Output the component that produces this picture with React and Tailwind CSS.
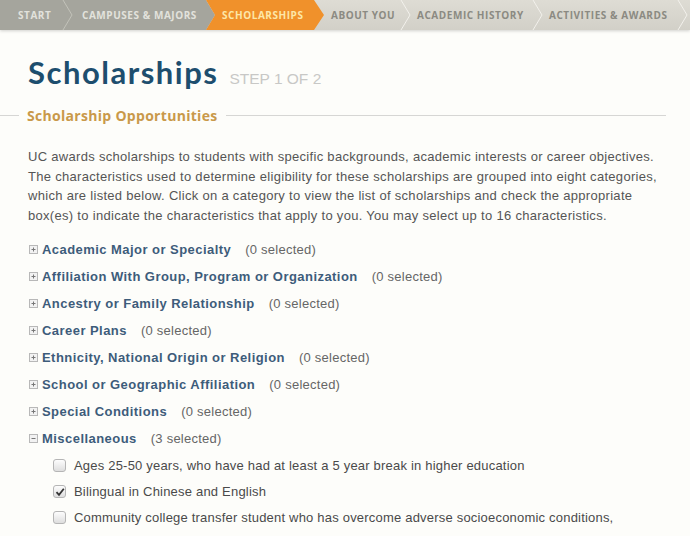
import React from "react";

const Chev = ({ color = "#c4c4bc" }) => (
  <svg width="12" height="30" viewBox="0 0 12 30" className="shrink-0">
    <polyline points="1,0 10,15 1,30" fill="none" stroke={color} strokeWidth="1" />
  </svg>
);

const navText = "text-[10px] font-bold tracking-[0.55px] uppercase whitespace-nowrap";

const categories = [
  ["Academic Major or Specialty", "(0 selected)"],
  ["Affiliation With Group, Program or Organization", "(0 selected)"],
  ["Ancestry or Family Relationship", "(0 selected)"],
  ["Career Plans", "(0 selected)"],
  ["Ethnicity, National Origin or Religion", "(0 selected)"],
  ["School or Geographic Affiliation", "(0 selected)"],
  ["Special Conditions", "(0 selected)"],
];

const Plus = ({ minus }) => (
  <svg width="9" height="9" viewBox="0 0 9 9" className="shrink-0">
    <rect x="0.5" y="0.5" width="8" height="8" fill="#f2f2f2" stroke="#b8b8b8" />
    <line x1="2.5" y1="4.5" x2="6.5" y2="4.5" stroke="#777" />
    {!minus && <line x1="4.5" y1="2.5" x2="4.5" y2="6.5" stroke="#777" />}
  </svg>
);

const Box = ({ checked }) => (
  <div className="w-[13px] h-[13px] rounded-[3px] border border-[#b5b5b5] bg-gradient-to-b from-[#fdfdfd] to-[#dedede] flex items-center justify-center shrink-0">
    {checked && (
      <svg width="10" height="10" viewBox="0 0 10 10">
        <path d="M1.5 5.2 L4 7.8 L8.8 1.8" fill="none" stroke="#333" strokeWidth="1.8" />
      </svg>
    )}
  </div>
);

const labelCls = "ml-[4px] font-bold text-[13px] tracking-[0.45px] text-[#3d5c7a]";
const selCls = "ml-[14px] text-[13px] tracking-[0.25px] text-[#666]";
const itemCls = "ml-[8px] text-[13px] tracking-[0.2px] text-[#4a4a4a]";

export default function App() {
  return (
    <div className="w-[690px] h-[536px] overflow-hidden bg-[#fdfdfa] font-['Liberation_Sans',Arial,sans-serif]">
      {/* nav */}
      <div className="flex h-[30px] bg-gradient-to-b from-[#dedcd4] to-[#d2d0c8] shadow-[0_1px_3px_rgba(0,0,0,0.18)] font-['Open_Sans',sans-serif]">
        <div className="flex items-center h-full w-[215px] shrink-0 bg-[#a5a59d] [clip-path:polygon(0_0,calc(100%-9px)_0,100%_50%,calc(100%-9px)_100%,0_100%)]">
          <span className={`${navText} text-[#e2e2dc] pl-[18px] w-[62px]`}>Start</span>
          <Chev color="#c2c2ba" />
          <span className={`${navText} text-[#e2e2dc] pl-[8px]`}>Campuses &amp; Majors</span>
        </div>
        <div className="flex items-center h-full w-[118px] ml-[-9px] shrink-0 bg-[#f0912b] [clip-path:polygon(0_0,calc(100%-10px)_0,100%_50%,calc(100%-10px)_100%,0_100%,9px_50%)]">
          <span className={`${navText} text-[#fde7a8] pl-[16px]`}>Scholarships</span>
        </div>
        <div className="flex items-center h-full">
          <span className={`${navText} text-[#8b8a82] pl-[7px] w-[76px]`}>About You</span>
          <Chev color="#f2f1ec" />
          <span className={`${navText} text-[#8b8a82] pl-[5px] w-[120px]`}>Academic History</span>
          <Chev color="#f2f1ec" />
          <span className={`${navText} text-[#8b8a82] pl-[5px] w-[133px]`}>Activities &amp; Awards</span>
          <Chev color="#f2f1ec" />
        </div>
      </div>

      {/* title */}
      <div className="flex items-baseline pl-[28px] pt-[22px]">
        <h1 className="font-['Lato',sans-serif] font-bold text-[31px] tracking-[1.5px] leading-[40px] text-[#1d4e6e]">Scholarships</h1>
        <span className="ml-[11px] text-[15.5px] text-[#c8c8c6]">STEP 1 OF 2</span>
      </div>

      {/* section header */}
      <div className="flex items-center mt-[13px]">
        <div className="w-[19px] h-px bg-[#d6d6d4]" />
        <span className="px-[8px] font-['Open_Sans',sans-serif] font-bold text-[14px] tracking-[0.3px] text-[#c9994a] whitespace-nowrap">Scholarship Opportunities</span>
        <div className="w-[440px] h-px bg-[#d6d6d4]" />
      </div>

      {/* paragraph */}
      <p className="pl-[28px] pr-[10px] mt-[21px] text-[13px] tracking-[0.3px] leading-[19.7px] text-[#555] whitespace-nowrap">
        UC awards scholarships to students with specific backgrounds, academic interests or career objectives.
        <br />
        The characteristics used to determine eligibility for these scholarships are grouped into eight categories,
        <br />
        which are listed below. Click on a category to view the list of scholarships and check the appropriate
        <br />
        box(es) to indicate the characteristics that apply to you. You may select up to 16 characteristics.
      </p>

      {/* categories */}
      <div className="mt-[10px] pl-[29px] flex flex-col">
        {categories.map(([label, sel]) => (
          <div key={label} className="flex items-center h-[27px]">
            <Plus />
            <span className={labelCls}>{label}</span>
            <span className={selCls}>{sel}</span>
          </div>
        ))}
        <div className="flex items-center h-[27px]">
          <Plus minus />
          <span className={labelCls}>Miscellaneous</span>
          <span className={selCls}>(3 selected)</span>
        </div>
        <div className="pl-[24px] flex flex-col">
          <label className="flex items-center h-[27px]">
            <Box />
            <span className={itemCls}>Ages 25-50 years, who have had at least a 5 year break in higher education</span>
          </label>
          <label className="flex items-center h-[26px]">
            <Box checked />
            <span className={itemCls}>Bilingual in Chinese and English</span>
          </label>
          <label className="flex items-center h-[25px]">
            <Box />
            <span className={`${itemCls} whitespace-nowrap`}>Community college transfer student who has overcome adverse socioeconomic conditions,</span>
          </label>
        </div>
      </div>
    </div>
  );
}
